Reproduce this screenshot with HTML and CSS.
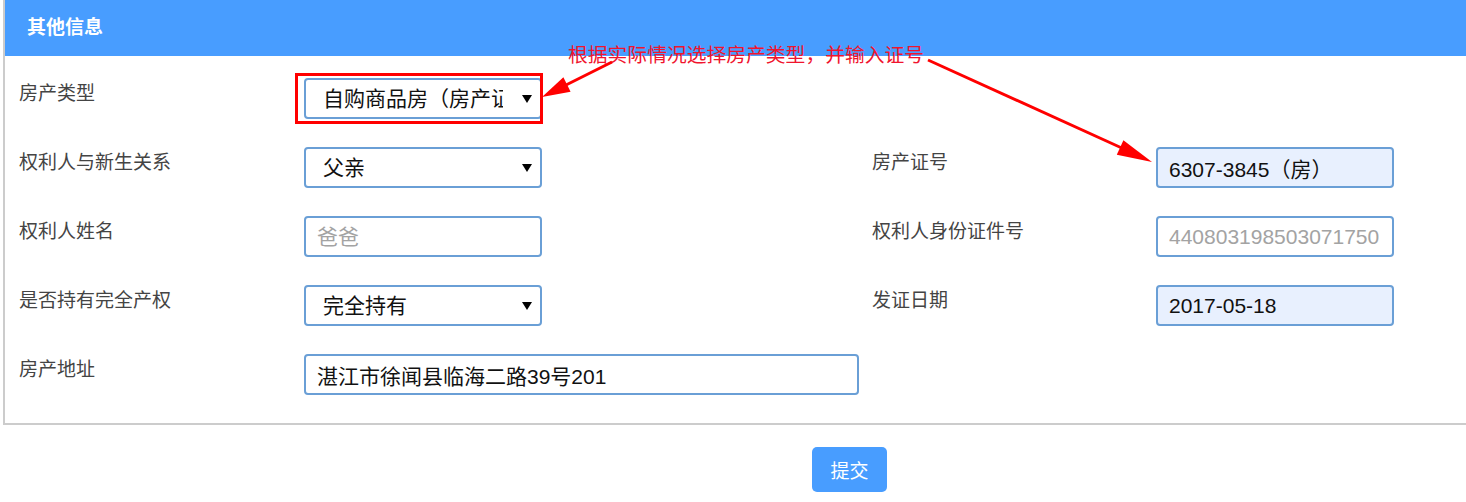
FILE: index.html
```html
<html lang="zh-CN">

<head>
    <meta charset="UTF-8">
    <meta name="viewport" content="width=device-width, initial-scale=1.0">
    <title>其他信息</title>
    <link rel="stylesheet" href="styles.css">
</head>

<body>
    <div class="page">
        <!-- 其他信息 -->
        <section class="panel">
            <h2 class="panel-title">其他信息</h2>

            <div class="form">
                <div class="form-row">
                    <label class="field-label">房产类型</label>
                    <div class="select-wrap highlight">
                        <select>
                            <option>自购商品房（房产证）</option>
                        </select>
                    </div>
                </div>

                <div class="form-row">
                    <label class="field-label">权利人与新生关系</label>
                    <div class="select-wrap">
                        <select>
                            <option>父亲</option>
                        </select>
                    </div>
                    <label class="field-label">房产证号</label>
                    <input type="text" class="filled" value="6307-3845（房）">
                </div>

                <div class="form-row">
                    <label class="field-label">权利人姓名</label>
                    <input type="text" placeholder="爸爸">
                    <label class="field-label">权利人身份证件号</label>
                    <input type="text" placeholder="440803198503071750">
                </div>

                <div class="form-row">
                    <label class="field-label">是否持有完全产权</label>
                    <div class="select-wrap">
                        <select>
                            <option>完全持有</option>
                        </select>
                    </div>
                    <label class="field-label">发证日期</label>
                    <input type="text" class="filled" value="2017-05-18">
                </div>

                <div class="form-row">
                    <label class="field-label">房产地址</label>
                    <input type="text" class="wide" value="湛江市徐闻县临海二路39号201">
                </div>
            </div>
        </section>

        <div class="actions">
            <button class="submit-btn">提交</button>
        </div>

        <!-- annotation overlay -->
        <div class="note">根据实际情况选择房产类型，并输入证号</div>
        <svg class="arrows" width="1466" height="502" viewBox="0 0 1466 502">
            <line x1="612" y1="62" x2="562" y2="87" stroke="#f00" stroke-width="3" />
            <polygon points="542,97 570.6,91.7 563.4,77.3" fill="#f00" />
            <line x1="928" y1="60" x2="1124" y2="149" stroke="#f00" stroke-width="3" />
            <polygon points="1152,162 1116.8,154.8 1123.4,140.2" fill="#f00" />
        </svg>
    </div>
</body>

</html>
```

FILE: styles.css
```css
html,
body {
    margin: 0;
    overflow: hidden;
}

body {
    font-family: "Liberation Sans", "Noto Sans CJK SC", sans-serif;
    color: #000;
}

.page {
    position: relative;
}

.panel {
    margin-left: 3px;
    border-left: 2px solid #cccccc;
    border-bottom: 2px solid #cccccc;
}

.panel-title {
    margin: 0;
    height: 56px;
    line-height: 56px;
    padding-left: 22px;
    background: #489dff;
    color: #fff;
    font-size: 19px;
    font-weight: bold;
}

.form {
    display: flex;
    flex-direction: column;
    gap: 28px;
    padding: 22px 0 28px 14px;
}

.form-row {
    display: grid;
    grid-template-columns: 285px 568px 284px 1fr;
    align-items: start;
}

.field-label {
    padding-top: 2px;
    font-size: 19px;
    line-height: 28px;
    color: #444;
}

input,
select {
    box-sizing: border-box;
    width: 238px;
    height: 41px;
    border: 2px solid #6a9fd6;
    border-radius: 4px;
    background: #fff;
    font-family: "Liberation Sans", "Noto Sans CJK SC", sans-serif;
    font-size: 21px;
    color: #111;
    outline: none;
}

input {
    padding: 0 11px;
}

input::placeholder {
    color: #a3a3a3;
}

input.filled {
    background: #e8f0fe;
}

input.wide {
    width: 555px;
}

.select-wrap {
    position: relative;
    width: 238px;
}

.select-wrap select {
    appearance: none;
    -webkit-appearance: none;
    padding: 0 37px 0 17px;
}

.select-wrap::after {
    content: "";
    position: absolute;
    right: 10px;
    top: 17px;
    border-left: 5px solid transparent;
    border-right: 5px solid transparent;
    border-top: 8px solid #000;
    pointer-events: none;
}

.select-wrap.highlight::before {
    content: "";
    position: absolute;
    left: -9px;
    top: -5px;
    right: -1px;
    bottom: -5px;
    border: 3px solid #f00;
    pointer-events: none;
    z-index: 1;
}

.actions {
    padding: 22px 0 0 812px;
}

.submit-btn {
    width: 75px;
    height: 45px;
    border: none;
    border-radius: 5px;
    background: #489dff;
    color: #fff;
    font-family: "Liberation Sans", "Noto Sans CJK SC", sans-serif;
    font-size: 19px;
    cursor: pointer;
}

.note {
    position: absolute;
    left: 568px;
    top: 43px;
    font-family: "Noto Sans CJK SC", sans-serif;
    font-size: 19.8px;
    line-height: 22px;
    color: #f0142e;
    white-space: nowrap;
}

.arrows {
    position: absolute;
    left: 0;
    top: 0;
    pointer-events: none;
}
```
